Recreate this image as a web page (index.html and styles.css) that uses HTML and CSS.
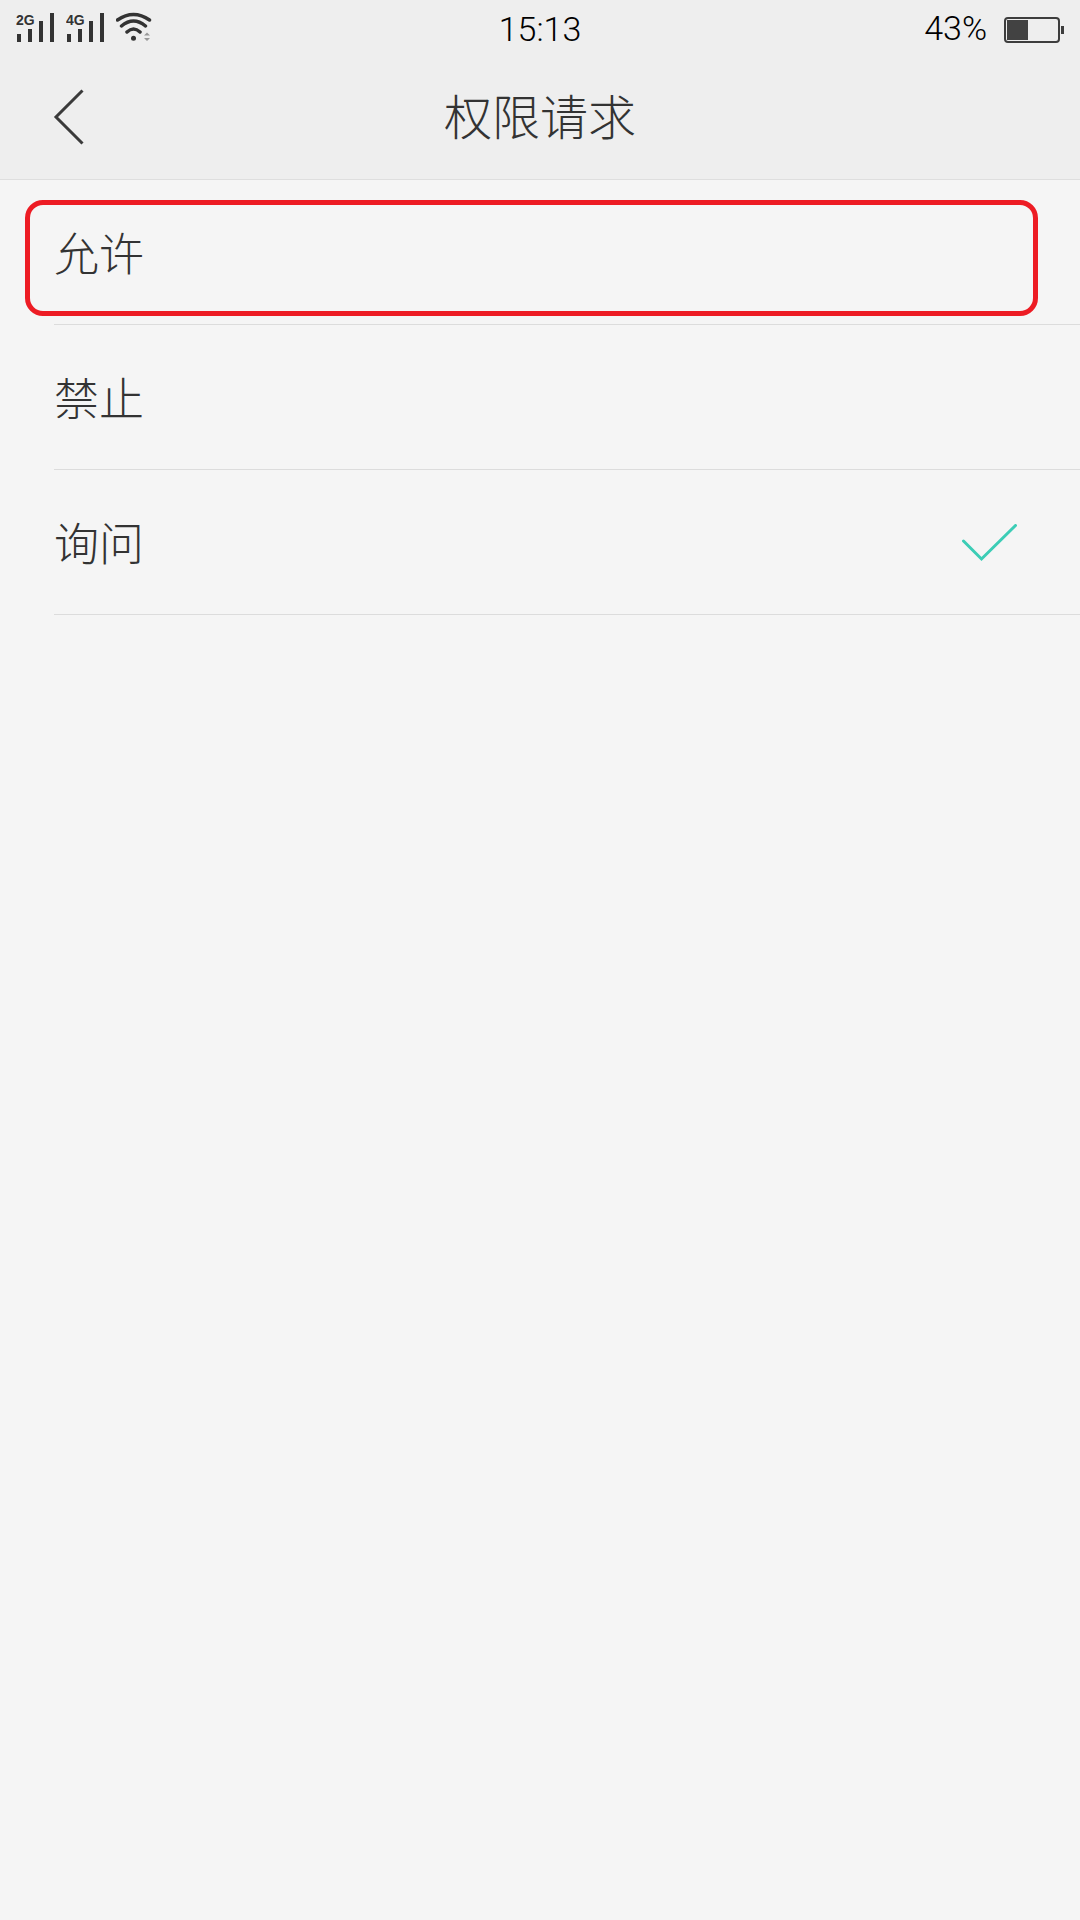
FILE: index.html
```html
<!DOCTYPE html>
<html lang="zh-CN">
<head>
  <meta charset="UTF-8">
  <meta name="viewport" content="width=device-width, initial-scale=1.0">
  <title>权限请求</title>
  <link rel="stylesheet" href="styles.css">
</head>
<body>
  <div class="top">
    <!-- Status bar -->
    <div class="status-bar">
      <div class="status-left">
        <svg class="signal" width="50" height="34" viewBox="0 0 50 34">
          <text class="net" x="0" y="16.500">2G</text>
          <path d="M1 26h4v8H1zM12 21h4v13h-4zM23 13h4v21h-4zM34 5h4v29h-4z"/>
        </svg>
        <svg class="signal" width="50" height="34" viewBox="0 0 50 34">
          <text class="net" x="0" y="16.500">4G</text>
          <path d="M1 26h4v8H1zM12 21h4v13h-4zM23 13h4v21h-4zM34 5h4v29h-4z"/>
        </svg>
        <svg class="wifi" width="40" height="34" viewBox="0 0 40 34">
          <path class="wifi-arc" d="M1.500 12Q17.500 1 33.500 12M5.500 18Q17.500 8 29.500 18M11 24Q17.500 18 24 24"/>
          <circle cx="17.500" cy="30.300" r="2.500"/>
          <path class="wifi-arrow" d="M28 27.500l3-3 3 3zM28 30l3 3 3-3z"/>
        </svg>
      </div>
      <div class="status-time">15:13</div>
      <div class="status-right">
        <span class="percent">43%</span>
        <div class="battery"><div class="battery-level"></div></div>
        <div class="battery-nub"></div>
      </div>
    </div>

    <!-- Title bar -->
    <div class="title-bar">
      <svg class="back" width="34" height="60" viewBox="0 0 34 60">
        <path d="M30.500 3.500L4 30l26.500 26.500"/>
      </svg>
      <h1>权限请求</h1>
    </div>
  </div>

  <!-- Options -->
  <div class="list">
    <div class="row">
      <span>允许</span>
      <div class="highlight"></div>
    </div>
    <div class="row">
      <span>禁止</span>
    </div>
    <div class="row">
      <span>询问</span>
      <svg class="check" width="60" height="42" viewBox="0 0 60 42">
        <path d="M3.500 17L21.500 35 55.500 1.500"/>
      </svg>
    </div>
  </div>
</body>
</html>
```

FILE: styles.css
```css
body {
  margin: 0;
  height: 1920px;
  background-color: #f5f5f5;
  font-family: "Noto Sans CJK SC", "Noto Sans", sans-serif;
  color: #333333;
  overflow: hidden;
}

.top {
  background-color: #eeeeee;
  border-bottom: 1px solid #dedede;
}

/* Status bar */
.status-bar {
  display: flex;
  align-items: center;
  height: 59px;
}
.status-left {
  flex: 1;
  display: flex;
  align-items: flex-start;
  padding-left: 16px;
  height: 59px;
}
.signal {
  margin-top: 8px;
  fill: #333333;
}
.net {
  font-family: "Liberation Sans", sans-serif;
  font-size: 14px;
  font-weight: bold;
}
.wifi {
  margin-top: 8px;
  fill: #333333;
}
.wifi-arc {
  fill: none;
  stroke: #333333;
  stroke-width: 3.500;
  stroke-linecap: round;
}
.wifi-arrow {
  fill: #999999;
}
.status-time {
  font-family: Roboto, sans-serif;
  font-size: 34px;
  font-weight: 300;
  color: #000000;
  margin-bottom: 2px;
}
.status-right {
  flex: 1;
  display: flex;
  justify-content: flex-end;
  align-items: center;
  padding-right: 16px;
  height: 54px;
}
.percent {
  font-family: Roboto, sans-serif;
  font-size: 34px;
  font-weight: 300;
  color: #000000;
  margin-right: 17px;
  margin-bottom: 4px;
}
.battery {
  box-sizing: border-box;
  width: 56px;
  height: 26px;
  border: 2.500px solid #3d3d3d;
  border-radius: 4px;
  padding: 1px;
}
.battery-level {
  width: 21px;
  height: 100%;
  background-color: #424242;
}
.battery-nub {
  width: 3px;
  height: 8px;
  margin-left: 1px;
  background-color: #3d3d3d;
}

/* Title bar */
.title-bar {
  position: relative;
  box-sizing: border-box;
  height: 120px;
  padding-bottom: 10px;
  display: flex;
  align-items: center;
  justify-content: center;
}
.back {
  position: absolute;
  left: 52px;
  top: 28px;
  fill: none;
  stroke: #3a3a3a;
  stroke-width: 3;
}
h1 {
  margin: 0;
  font-size: 48px;
  font-weight: 300;
}

/* Options */
.list {
  padding-left: 54px;
}
.row {
  position: relative;
  display: flex;
  align-items: center;
  justify-content: space-between;
  box-sizing: border-box;
  height: 145px;
  border-bottom: 1px solid #dcdcdc;
  padding-right: 60px;
  font-size: 45px;
  font-weight: 300;
}
.row span {
  margin-bottom: 2px;
}
.highlight {
  position: absolute;
  left: -29px;
  top: 20px;
  width: 1013px;
  height: 116px;
  box-sizing: border-box;
  border: 5px solid #ed1c24;
  border-radius: 18px;
}
.check {
  margin-top: 5px;
  fill: none;
  stroke: #3ccdb6;
  stroke-width: 3;
  stroke-linecap: round;
}
```
